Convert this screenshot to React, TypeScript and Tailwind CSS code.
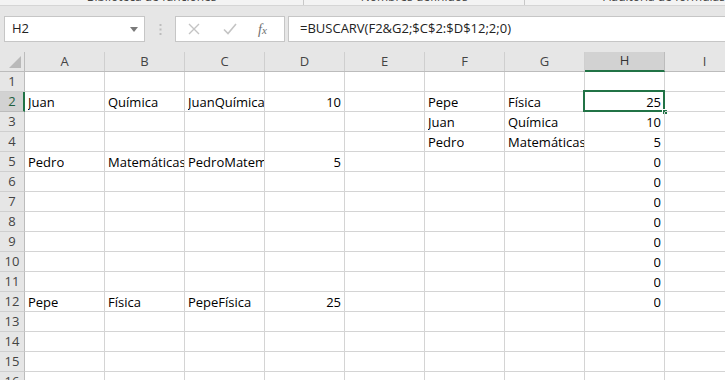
import React from "react";

const COLS = ["A", "B", "C", "D", "E", "F", "G", "H", "I"];

type Cell = { v: string; r?: boolean };
const DATA: Record<string, Cell> = {
  A2: { v: "Juan" },
  B2: { v: "Química" },
  C2: { v: "JuanQuímica" },
  D2: { v: "10", r: true },
  F2: { v: "Pepe" },
  G2: { v: "Física" },
  H2: { v: "25", r: true },
  F3: { v: "Juan" },
  G3: { v: "Química" },
  H3: { v: "10", r: true },
  F4: { v: "Pedro" },
  G4: { v: "Matemáticas" },
  H4: { v: "5", r: true },
  A5: { v: "Pedro" },
  B5: { v: "Matemáticas" },
  C5: { v: "PedroMatemáticas" },
  D5: { v: "5", r: true },
  H5: { v: "0", r: true },
  H6: { v: "0", r: true },
  H7: { v: "0", r: true },
  H8: { v: "0", r: true },
  H9: { v: "0", r: true },
  H10: { v: "0", r: true },
  H11: { v: "0", r: true },
  A12: { v: "Pepe" },
  B12: { v: "Física" },
  C12: { v: "PepeFísica" },
  D12: { v: "25", r: true },
  H12: { v: "0", r: true },
};

const font = { fontFamily: '"Open Sans", "Liberation Sans", sans-serif' };

function Ribbon() {
  return (
    <div className="flex h-[6px] overflow-hidden bg-[#f3f3f3] border-b border-[#d5d5d5] text-[12px] leading-[12px] text-[#444]">
      <div className="w-[347px] flex justify-center border-r border-[#c8c8c8]">
        <span className="-mt-[9px]">Biblioteca de funciones</span>
      </div>
      <div className="w-[252px] flex justify-center border-r border-[#c8c8c8]">
        <span className="-mt-[9px]">Nombres definidos</span>
      </div>
      <div className="flex-1 pl-[78px]">
        <span className="-mt-[9px] block whitespace-nowrap">Auditoría de fórmulas</span>
      </div>
    </div>
  );
}

function FormulaBar() {
  return (
    <div className="flex items-center h-[46px] bg-[#e6e6e6] pl-[4px]">
      <div className="w-[141px] h-[26px] bg-white border border-[#c6c6c6] flex items-center justify-between pl-[7px] pr-[6px] text-[13px] text-[#222]">
        <span>H2</span>
        <svg width="8" height="5" viewBox="0 0 8 5">
          <path d="M0 0 L8 0 L4 5 Z" fill="#7a7a7a" />
        </svg>
      </div>
      <div className="w-[30px] flex justify-center">
        <svg width="3" height="11" viewBox="0 0 3 11">
          <rect x="0.5" y="0" width="2" height="2" fill="#bdbdbd" />
          <rect x="0.5" y="4.5" width="2" height="2" fill="#bdbdbd" />
          <rect x="0.5" y="9" width="2" height="2" fill="#bdbdbd" />
        </svg>
      </div>
      <div className="w-[110px] h-[26px] bg-white border border-[#c6c6c6] flex items-center pl-[12px]">
        <svg width="12" height="12" viewBox="0 0 12 12">
          <path d="M1 1 L11 11 M11 1 L1 11" stroke="#c4c4c4" strokeWidth="1.4" />
        </svg>
        <svg width="14" height="12" viewBox="0 0 14 12" className="ml-[23px]">
          <path d="M1 6.5 L5 10.5 L13 1" stroke="#c4c4c4" strokeWidth="1.6" fill="none" />
        </svg>
        <span
          className="ml-[21px] text-[14px] italic text-[#6e6e6e]"
          style={{ fontFamily: '"Liberation Serif", serif' }}
        >
          f<span className="text-[11px]">x</span>
        </span>
      </div>
      <div className="ml-[3px] flex-1 h-[26px] bg-white border-y border-l border-[#c6c6c6] flex items-center pl-[11px] text-[13px] text-[#222] whitespace-nowrap">
        =BUSCARV(F2&amp;G2;$C$2:$D$12;2;0)
      </div>
    </div>
  );
}

function HeaderRow() {
  return (
    <div className="flex h-[20px] bg-[#e6e6e6] border-b border-[#bcbcbc]">
      <div className="w-[25px] shrink-0 border-r border-[#bcbcbc] relative">
        <svg width="12" height="12" viewBox="0 0 12 12" className="absolute right-[3px] bottom-[3px]">
          <path d="M12 0 L12 12 L0 12 Z" fill="#b9b9b9" />
        </svg>
      </div>
      {COLS.map((c) => {
        const sel = c === "H";
        return (
          <div
            key={c}
            className={
              sel
                ? "w-[80px] shrink-0 border-r border-[#bcbcbc] bg-[#d2d2d2] flex items-center justify-center text-[13px] text-[#333] border-b-2 border-b-[#217346] -mb-[1px]"
                : "w-[80px] shrink-0 border-r border-[#cfcfcf] flex items-center justify-center text-[13px] text-[#444]"
            }
          >
            {c}
          </div>
        );
      })}
    </div>
  );
}

function Row({ n }: { n: number }) {
  const sel = n === 2;
  return (
    <div className="flex h-[20px]">
      <div
        className={
          sel
            ? "w-[25px] shrink-0 bg-[#d2d2d2] border-r-2 border-[#217346] border-b border-b-[#bcbcbc] flex items-center justify-center pl-[1px] text-[13px] text-[#1f5f3f]"
            : "w-[25px] shrink-0 bg-[#e6e6e6] border-r border-[#bcbcbc] border-b border-b-[#cfcfcf] flex items-center justify-center text-[13px] text-[#444]"
        }
      >
        {n}
      </div>
      {COLS.map((c) => {
        const key = `${c}${n}`;
        const cell = DATA[key];
        const isSel = key === "H2";
        return (
          <div
            key={key}
            className={
              "relative w-[80px] shrink-0 border-r border-b border-[#d4d4d4] flex items-end text-[13px] leading-[17px] text-black " +
              (cell?.r ? "justify-end pr-[3px]" : "pl-[3px]")
            }
          >
            <span className="block overflow-hidden whitespace-nowrap">{cell?.v ?? ""}</span>
            {isSel && (
              <>
                <div className="absolute -left-[2px] -top-[2px] w-[82px] h-[22px] border-2 border-[#217346]" />
                <div className="absolute -right-[4px] -bottom-[4px] w-[6px] h-[6px] bg-[#217346] border border-white" />
              </>
            )}
          </div>
        );
      })}
    </div>
  );
}

export default function App() {
  const rows = Array.from({ length: 16 }, (_, i) => i + 1);
  return (
    <div className="w-[725px] h-[380px] overflow-hidden bg-white" style={font}>
      <Ribbon />
      <FormulaBar />
      <HeaderRow />
      {rows.map((n) => (
        <Row key={n} n={n} />
      ))}
    </div>
  );
}
